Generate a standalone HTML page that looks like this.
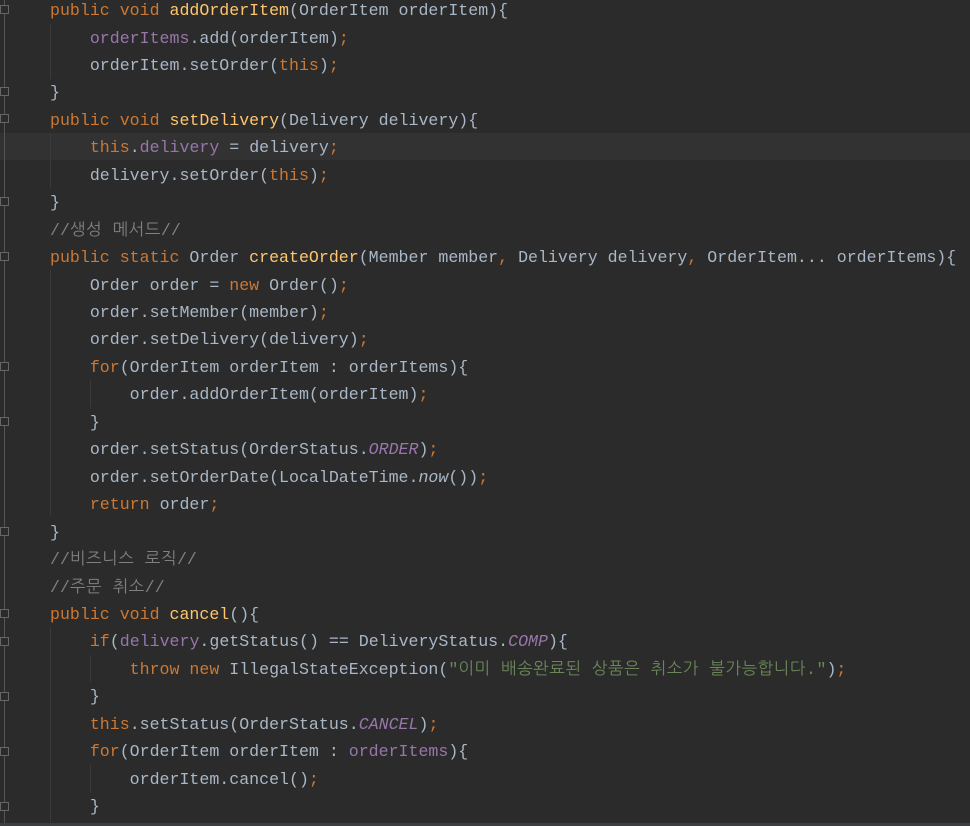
<!DOCTYPE html><html><head><meta charset="utf-8"><style>
body{margin:0;width:970px;height:826px;background:#2b2b2b;overflow:hidden;position:relative;font-family:"Liberation Mono","NanumGothic","Noto Sans CJK KR",monospace;font-size:16.6px;color:#a9b7c6}
.l{position:absolute;left:50px;height:27.45px;line-height:27.45px;white-space:pre;margin-top:1px}
.k{color:#cc7832}.m{color:#ffc66d}.f{color:#9876aa}.c{color:#808080}.s{color:#6a8759}.i{color:#9876aa;font-style:italic}
.ko{letter-spacing:0.5px}
.hl{position:absolute;left:0;right:0;top:133px;height:27px;background:#323232}
.g{position:absolute;left:4px;top:0;bottom:0;width:1px;background:#555}
.fm{position:absolute;left:0;width:9px;height:9px;border:1px solid #666;background:#2b2b2b;box-sizing:border-box}
.ig{position:absolute;width:1px;background:#3b3b3b}
.bot{position:absolute;left:0;right:0;top:823px;height:3px;background:#3c3f41}
</style></head><body>
<div class="hl"></div><div class="g"></div>
<div class="fm" style="top:5px"></div><div class="fm" style="top:87px"></div><div class="fm" style="top:114px"></div><div class="fm" style="top:197px"></div><div class="fm" style="top:252px"></div><div class="fm" style="top:362px"></div><div class="fm" style="top:417px"></div><div class="fm" style="top:527px"></div><div class="fm" style="top:609px"></div><div class="fm" style="top:637px"></div><div class="fm" style="top:692px"></div><div class="fm" style="top:747px"></div><div class="fm" style="top:802px"></div>
<div class="ig" style="left:50px;top:24px;height:55px"></div><div class="ig" style="left:50px;top:133px;height:55px"></div><div class="ig" style="left:50px;top:270px;height:245px"></div><div class="ig" style="left:90px;top:380px;height:27px"></div><div class="ig" style="left:50px;top:627px;height:195px"></div><div class="ig" style="left:90px;top:655px;height:27px"></div><div class="ig" style="left:90px;top:765px;height:27px"></div>
<div class="l" style="top:-4px"><span class="k">public void </span><span class="m">addOrderItem</span>(OrderItem orderItem){</div>
<div class="l" style="top:23.5px">    <span class="f">orderItems</span>.add(orderItem)<span class="k">;</span></div>
<div class="l" style="top:50.9px">    orderItem.setOrder(<span class="k">this</span>)<span class="k">;</span></div>
<div class="l" style="top:78.4px">}</div>
<div class="l" style="top:105.8px"><span class="k">public void </span><span class="m">setDelivery</span>(Delivery delivery){</div>
<div class="l" style="top:133.3px">    <span class="k">this</span>.<span class="f">delivery </span>= delivery<span class="k">;</span></div>
<div class="l" style="top:160.7px">    delivery.setOrder(<span class="k">this</span>)<span class="k">;</span></div>
<div class="l" style="top:188.2px">}</div>
<div class="l c" style="top:215.6px">//<span class="ko">생성 메서드</span>//</div>
<div class="l" style="top:243.1px"><span class="k">public static </span>Order <span class="m">createOrder</span>(Member member<span class="k">, </span>Delivery delivery<span class="k">, </span>OrderItem... orderItems){</div>
<div class="l" style="top:270.5px">    Order order = <span class="k">new </span>Order()<span class="k">;</span></div>
<div class="l" style="top:298px">    order.setMember(member)<span class="k">;</span></div>
<div class="l" style="top:325.4px">    order.setDelivery(delivery)<span class="k">;</span></div>
<div class="l" style="top:352.9px">    <span class="k">for</span>(OrderItem orderItem : orderItems){</div>
<div class="l" style="top:380.3px">        order.addOrderItem(orderItem)<span class="k">;</span></div>
<div class="l" style="top:407.8px">    }</div>
<div class="l" style="top:435.2px">    order.setStatus(OrderStatus.<span class="i">ORDER</span>)<span class="k">;</span></div>
<div class="l" style="top:462.7px">    order.setOrderDate(LocalDateTime.<span style="font-style:italic">now</span>())<span class="k">;</span></div>
<div class="l" style="top:490.1px">    <span class="k">return </span>order<span class="k">;</span></div>
<div class="l" style="top:517.6px">}</div>
<div class="l c" style="top:545px">//<span class="ko">비즈니스 로직</span>//</div>
<div class="l c" style="top:572.5px">//<span class="ko">주문 취소</span>//</div>
<div class="l" style="top:599.9px"><span class="k">public void </span><span class="m">cancel</span>(){</div>
<div class="l" style="top:627.4px">    <span class="k">if</span>(<span class="f">delivery</span>.getStatus() == DeliveryStatus.<span class="i">COMP</span>){</div>
<div class="l" style="top:654.8px">        <span class="k">throw new </span>IllegalStateException(<span class="s">"<span class="ko">이미 배송완료된 상품은 취소가 불가능합니다.</span>"</span>)<span class="k">;</span></div>
<div class="l" style="top:682.3px">    }</div>
<div class="l" style="top:709.7px">    <span class="k">this</span>.setStatus(OrderStatus.<span class="i">CANCEL</span>)<span class="k">;</span></div>
<div class="l" style="top:737.2px">    <span class="k">for</span>(OrderItem orderItem : <span class="f">orderItems</span>){</div>
<div class="l" style="top:764.6px">        orderItem.cancel()<span class="k">;</span></div>
<div class="l" style="top:792.1px">    }</div>
<div class="bot"></div>
</body></html>
